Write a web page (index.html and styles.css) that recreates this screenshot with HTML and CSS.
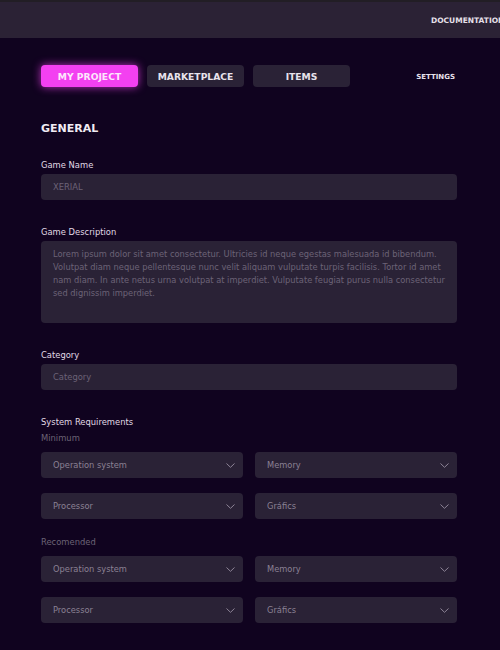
FILE: index.html
```html
<!DOCTYPE html>
<html>
<head>
<meta charset="utf-8">
<link rel="stylesheet" href="styles.css">
</head>
<body>
<header class="topbar"><span class="doc-link">DOCUMENTATION</span></header>
<main class="main">
  <nav class="tabs">
    <span class="tab tab-active">MY PROJECT</span>
    <span class="tab">MARKETPLACE</span>
    <span class="tab">ITEMS</span>
    <span class="settings">SETTINGS</span>
  </nav>
  <h2 class="section-title">GENERAL</h2>

  <div class="label first">Game Name</div>
  <div class="field"><span class="placeholder">XERIAL</span></div>

  <div class="label">Game Description</div>
  <div class="field textarea"><span class="placeholder">Lorem ipsum dolor sit amet consectetur. Ultricies id neque egestas malesuada id bibendum. Volutpat diam neque pellentesque nunc velit aliquam vulputate turpis facilisis. Tortor id amet nam diam. In ante netus urna volutpat at imperdiet. Vulputate feugiat purus nulla consectetur sed dignissim imperdiet.</span></div>

  <div class="label">Category</div>
  <div class="field"><span class="placeholder">Category</span></div>

  <div class="label">System Requirements</div>
  <div class="sublabel">Minimum</div>
  <div class="select-grid">
    <div class="select"><span>Operation system</span><svg class="chev" width="9" height="5" viewBox="0 0 9 5"><path d="M0.5 0.5 L4.5 4.3 L8.5 0.5" fill="none" stroke="#8d8497" stroke-width="1"/></svg></div>
    <div class="select"><span>Memory</span><svg class="chev" width="9" height="5" viewBox="0 0 9 5"><path d="M0.5 0.5 L4.5 4.3 L8.5 0.5" fill="none" stroke="#8d8497" stroke-width="1"/></svg></div>
    <div class="select"><span>Processor</span><svg class="chev" width="9" height="5" viewBox="0 0 9 5"><path d="M0.5 0.5 L4.5 4.3 L8.5 0.5" fill="none" stroke="#8d8497" stroke-width="1"/></svg></div>
    <div class="select"><span>Gráfics</span><svg class="chev" width="9" height="5" viewBox="0 0 9 5"><path d="M0.5 0.5 L4.5 4.3 L8.5 0.5" fill="none" stroke="#8d8497" stroke-width="1"/></svg></div>
  </div>
  <div class="sublabel rec">Recomended</div>
  <div class="select-grid">
    <div class="select"><span>Operation system</span><svg class="chev" width="9" height="5" viewBox="0 0 9 5"><path d="M0.5 0.5 L4.5 4.3 L8.5 0.5" fill="none" stroke="#8d8497" stroke-width="1"/></svg></div>
    <div class="select"><span>Memory</span><svg class="chev" width="9" height="5" viewBox="0 0 9 5"><path d="M0.5 0.5 L4.5 4.3 L8.5 0.5" fill="none" stroke="#8d8497" stroke-width="1"/></svg></div>
    <div class="select"><span>Processor</span><svg class="chev" width="9" height="5" viewBox="0 0 9 5"><path d="M0.5 0.5 L4.5 4.3 L8.5 0.5" fill="none" stroke="#8d8497" stroke-width="1"/></svg></div>
    <div class="select"><span>Gráfics</span><svg class="chev" width="9" height="5" viewBox="0 0 9 5"><path d="M0.5 0.5 L4.5 4.3 L8.5 0.5" fill="none" stroke="#8d8497" stroke-width="1"/></svg></div>
  </div>
</main>
</body>
</html>
```

FILE: styles.css
```css
* { box-sizing: border-box; }
html, body { margin: 0; padding: 0; }
body {
  background: #10031f;
  font-family: "DejaVu Sans", "Open Sans", sans-serif;
  color: #e4dde9;
  width: 500px;
  height: 650px;
  overflow: hidden;
}
.topbar {
  height: 38px;
  background: #2b2235;
  border-top: 2px solid #221e25;
  display: flex;
  align-items: center;
  padding-left: 431px;
  white-space: nowrap;
  overflow: hidden;
}
.doc-link {
  font-size: 7.5px;
  font-weight: 600;
  color: #e6e0ea;
}
.main {
  padding: 0 43px 0 41px;
}
.tabs {
  display: flex;
  align-items: center;
  margin-top: 27px;
  gap: 9px;
}
.tab {
  width: 97px;
  height: 22px;
  border-radius: 4px;
  background: #2a2236;
  display: flex;
  align-items: center;
  justify-content: center;
  padding-top: 1px;
  font-size: 9.2px;
  font-weight: 600;
  color: #e8e2ec;
}
.tab-active {
  background: #f340f1;
  color: #fde6fc;
  box-shadow: 0 0 8px rgba(243, 64, 241, 0.75);
}
.settings {
  margin-left: auto;
  margin-right: 2px;
  padding-top: 1px;
  font-size: 7px;
  font-weight: 600;
  color: #e8e2ec;
}
.section-title {
  margin: 35px 0 0 0;
  font-size: 11px;
  line-height: 14px;
  font-weight: 600;
  color: #f0ebf3;
}
.label {
  margin-top: 27px;
  font-size: 8.4px;
  line-height: 10px;
  color: #e0dae5;
}
.label.first { margin-top: 24px; }
.field {
  margin-top: 4px;
  height: 26px;
  border-radius: 4px;
  background: #2a2236;
  padding: 0 12px;
  display: flex;
  align-items: center;
}
.placeholder {
  font-size: 8.4px;
  color: #6c6376;
}
.textarea {
  height: 82px;
  align-items: flex-start;
  padding: 7px 9px 7px 12px;
}
.textarea .placeholder {
  font-size: 8.3px;
  line-height: 13px;
}
.sublabel {
  margin-top: 6px;
  font-size: 8.4px;
  line-height: 10px;
  color: #6c6376;
}
.sublabel.rec { margin-top: 18px; }
.select-grid {
  margin-top: 9px;
  display: grid;
  grid-template-columns: 1fr 1fr;
  column-gap: 12px;
  row-gap: 15px;
}
.select {
  height: 26px;
  border-radius: 4px;
  background: #2a2236;
  display: flex;
  align-items: center;
  justify-content: space-between;
  padding: 0 8px 0 12px;
  font-size: 8.3px;
  color: #8a8194;
}
.chev { display: block; }
```
